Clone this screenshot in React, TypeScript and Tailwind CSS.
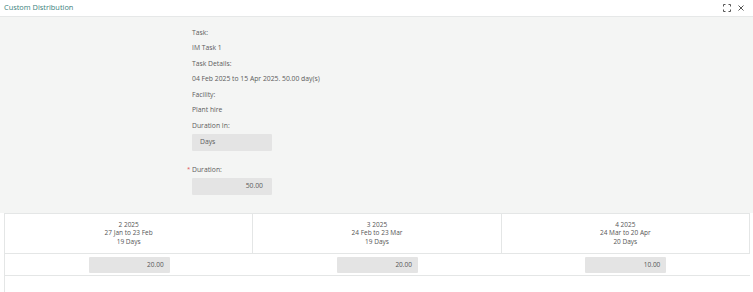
import { useState } from "react";

const PERIODS = [
  { id: 2, label: "2 2025", range: "27 Jan to 23 Feb", days: "19 Days", value: "20.00" },
  { id: 3, label: "3 2025", range: "24 Feb to 23 Mar", days: "19 Days", value: "20.00" },
  { id: 4, label: "4 2025", range: "24 Mar to 20 Apr", days: "20 Days", value: "10.00" },
];

const Field = ({ label, value }: { label: string; value: string }) => (
  <div className="flex flex-col">
    <p className="h-[15px] leading-[15px]">{label}</p>
    <p className="h-[16px] leading-[16px]">{value}</p>
  </div>
);

const App = () => {
  const [duration] = useState("50.00");

  return (
    <div className="w-[753px] h-[292px] bg-white overflow-hidden text-[#5c5c5c] font-['Open_Sans',sans-serif]">
      <div className="h-[17px] flex items-center justify-between px-[4px] border-b border-[#e6e8e8]">
        <h1 className="text-[7.4px] text-[#3b7f7d]">Custom Distribution</h1>
        <div className="flex items-center gap-[7px] pr-[5px] text-[#555]">
          <svg width="8" height="8" viewBox="0 0 8 8" fill="none" stroke="currentColor" strokeWidth="1">
            <path d="M0.5 2.5V0.5H2.5M5.5 0.5H7.5V2.5M7.5 5.5V7.5H5.5M2.5 7.5H0.5V5.5" />
          </svg>
          <svg width="6" height="6" viewBox="0 0 6 6" fill="none" stroke="currentColor" strokeWidth="1">
            <path d="M0.5 0.5L5.5 5.5M5.5 0.5L0.5 5.5" />
          </svg>
        </div>
      </div>

      <div className="h-[196px] bg-[#f4f5f4] pl-[192px] pt-[8px] text-[6.8px]">
        <Field label="Task:" value="IM Task 1" />
        <Field label="Task Details:" value="04 Feb 2025 to 15 Apr 2025. 50.00 day(s)" />
        <Field label="Facility:" value="Plant hire" />
        <p className="h-[11px] leading-[15px]">Duration In:</p>
        <div className="mt-[5px] w-[80px] h-[17px] bg-[#e4e4e4] rounded-[1px] flex items-center pl-[8px]">Days</div>
        <div className="relative mt-[13px] h-[12px] leading-[12px]">
          <span className="absolute -left-[5px] -top-[1px] text-[#e05050] text-[6px]">*</span>
          Duration:
        </div>
        <div className="mt-[2px] w-[80px] h-[17px] bg-[#e4e4e4] rounded-[1px] flex items-center justify-end pr-[9px]">
          {duration}
        </div>
      </div>

      <div className="ml-[4px] mr-[3px] h-[79px] border-l border-[#e4e6e6] text-[6.5px] text-[#555]">
        <div className="grid grid-cols-3 border-t border-[#e4e6e6]">
          {PERIODS.map((p) => (
            <div
              key={p.id}
              className="h-[40px] border-r border-b border-[#e4e6e6] flex flex-col items-center justify-center leading-[8.5px]"
            >
              <span>{p.label}</span>
              <span>{p.range}</span>
              <span>{p.days}</span>
            </div>
          ))}
          {PERIODS.map((p) => (
            <div key={p.id} className="h-[22px] border-b border-[#e4e6e6] flex items-center justify-center">
              <div className="w-[81px] h-[16px] bg-[#e4e4e4] rounded-[1px] flex items-center justify-end pr-[6px]">
                {p.value}
              </div>
            </div>
          ))}
        </div>
      </div>
    </div>
  );
};

export default App;
